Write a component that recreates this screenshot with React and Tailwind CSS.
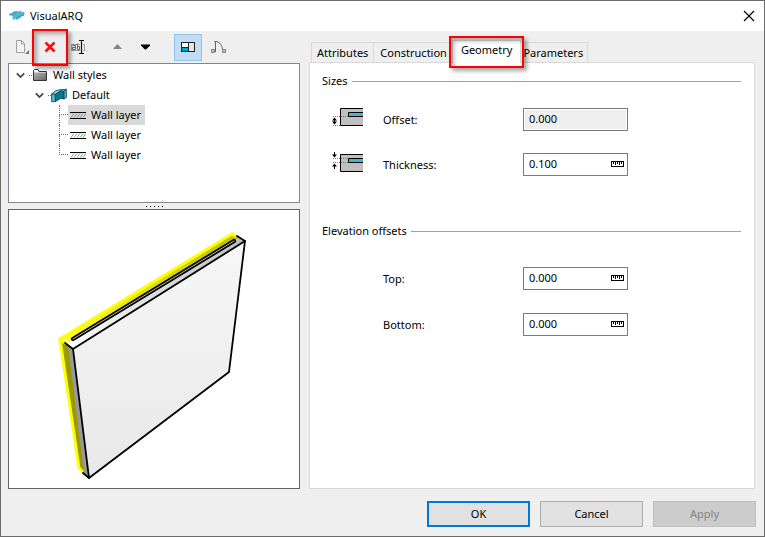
import { useState } from "react";

const AppLogo = () => (
    <svg className="w-4 h-3" viewBox="0 0 16 12">
        <defs>
            <linearGradient id="logo" x1="0" y1="0" x2="1" y2="1">
                <stop offset="0" stopColor="#2e86a8" />
                <stop offset="0.5" stopColor="#55bcd8" />
                <stop offset="1" stopColor="#1b6f96" />
            </linearGradient>
        </defs>
        <path fill="url(#logo)" d="M0 4.2 L1.5 3.2 L3 3.2 L4.5 1.6 L7.5 1 L9 1.8 L11.5 .8 L12.5 1.8 L14.6 2 L15.8 3 L14.8 4.2 L15.4 5.2 L13.6 6.2 L12 6.4 L11.4 8.2 L10 8 L9 9.4 L7.4 9.6 L6.6 8.2 L5.4 9.8 L3.8 9.6 L3.6 7 L3 5.6 L.6 5.4 Z" />
    </svg>
)

const NewIcon = () => (
    <svg className="w-4 h-4" viewBox="0 0 16 16" fill="none">
        <path d="M2.5 1.5 H7.5 L10.5 4.5 V13.5 H2.5 Z M7.5 1.5 V5 H10.5" stroke="#a0a0a0" fill="#f4f4f4" />
        <path d="M15 11 V15 H11 Z" fill="#777" />
    </svg>
)

const DeleteIcon = () => (
    <svg className="w-4 h-4" viewBox="0 0 16 16">
        <path d="M3.5 3.5 L12.5 12.5 M12.5 3.5 L3.5 12.5" stroke="#ff0d0d" strokeWidth="2.6" />
    </svg>
)

const RenameIcon = () => (
    <svg className="w-4 h-4" viewBox="0 0 16 16" fill="none">
        <path d="M10 5.5 H1.5 V11.5 H10 M13 5.5 H14.5 V11.5 H13" stroke="#9a9a9a" />
        <path d="M2.5 6.5 H5.5 V10.5 H2.5 V8.5 H5.5 M7.5 4.5 V10.5 H9.5 V7.5 H7.5" stroke="#666" />
        <path d="M9 1.5 H11 L11.5 2 L12 1.5 H14 M11.5 2 V14 M9 14.5 H11 L11.5 14 L12 14.5 H14" stroke="#111" strokeWidth="1.2" />
    </svg>
)

const UpIcon = () => (
    <svg className="w-4 h-4" viewBox="0 0 16 16"><path d="M7 5.5 H8 L12 10 H3 Z" fill="#868686" /></svg>
)

const DownIcon = () => (
    <svg className="w-4 h-4" viewBox="0 0 16 16"><path d="M3 5.5 H12 V6.5 L8 10.5 H7 L3 6.5 Z" fill="#000" /></svg>
)

const PreviewIcon = () => (
    <svg className="w-4 h-4" viewBox="0 0 16 16">
        <rect x="1.5" y="3.5" width="13" height="9" fill="#e6e6e6" stroke="#222" />
        <rect x="2" y="4" width="6" height="4" fill="#fff" />
        <rect x="2" y="8" width="6" height="4" fill="#00a5d2" />
        <path d="M8.5 3 V13 M2 8.5 H8" stroke="#222" />
    </svg>
)

const CurveIcon = () => (
    <svg className="w-4 h-4" viewBox="0 0 16 16" fill="none">
        <path d="M5.5 13 V2.5 C9 2.5 11.5 5 12.5 10" stroke="#666" />
        <path d="M4 2.5 H7" stroke="#777" />
        <rect x="1.5" y="10.5" width="3" height="3" stroke="#8a8a8a" fill="#bbb" />
        <rect x="12.5" y="10.5" width="3" height="3" stroke="#8a8a8a" fill="#bbb" />
    </svg>
)

const Chevron = () => (
    <svg className="w-[9px] h-[9px]" viewBox="0 0 9 9"><path d="M.8 2.4 L4.5 6.1 L8.2 2.4" fill="none" stroke="#444" strokeWidth="1.7" /></svg>
)

const FolderIcon = () => (
    <svg className="w-4 h-3" viewBox="0 0 16 12">
        <defs>
            <linearGradient id="folder" x1="0" y1="0" x2="1" y2="1">
                <stop offset="0" stopColor="#b5b5b5" />
                <stop offset="1" stopColor="#676767" />
            </linearGradient>
        </defs>
        <path d="M1.5 11.5 V1.5 L2.5 .5 H6 L7 2.5 H14.5 V11.5 Z" fill="#fff" stroke="#333" />
        <path d="M2 11 V3.5 H14 V11 Z" fill="url(#folder)" />
    </svg>
)

const WallIcon = () => (
    <svg className="w-4 h-[15px]" viewBox="0 0 16 15" stroke="#0b3f4c" strokeWidth="0.8" strokeLinejoin="round">
        <path d="M.6 6 L5 2.5 L10 1.5 L15.4 1.4 L13 3.4 L9.5 3 L4.4 6.4 Z" fill="#7fd6e4" />
        <path d="M.6 6 L4.4 6.4 V13.6 L.6 13.8 Z" fill="#4bb9cf" />
        <path d="M4.4 6.4 L9.5 3 L13 3.4 V11 L9.8 10.4 L4.4 13.6 Z" fill="#11758c" />
        <path d="M13 3.4 L15.4 1.4 V9.6 L13 11 Z" fill="#4bb9cf" />
    </svg>
)

const LayerIcon = () => (
    <svg className="w-4 h-[7px]" viewBox="0 0 16 7">
        <path d="M1 5.5 L4 1.5 M4 5.5 L7 1.5 M7 5.5 L10 1.5 M10 5.5 L13 1.5 M13 5.5 L16 1.5" stroke="#777" strokeWidth="0.8" />
        <path d="M0 .5 H16 M0 6.5 H16" stroke="#000" />
    </svg>
)

const RulerIcon = () => (
    <svg className="absolute right-1 top-2 w-[13px] h-[7px] pointer-events-none" viewBox="0 0 13 7">
        <rect x=".5" y=".5" width="12" height="5" fill="#fff" stroke="#000" />
        <path d="M2.5 1 V3 M4.5 1 V4 M6.5 1 V3 M8.5 1 V4 M10.5 1 V3" stroke="#000" />
    </svg>
)

const LayerBody = () => (
    <>
        <rect x="9" y="4" width="22" height="17" fill="#c0c0c0" />
        <path d="M31 3.5 H8.5 V20.5 H31" fill="none" stroke="#000" />
        <path d="M31 7.5 H16.5 V11.5 H31" fill="#45b5cf" stroke="#000" />
    </>
)

const OffsetIcon = () => (
    <svg className="w-[31px] h-[23px]" viewBox="0 3 31 23">
        <LayerBody />
        <path d="M1 11.5 H16 M1 20.5 H8" stroke="#777" strokeDasharray="1 1" />
        <path d="M2.5 13 V19" stroke="#000" />
        <path d="M0 15.5 L2.5 12.5 L5 15.5 Z M0 16.5 L2.5 19.5 L5 16.5 Z" />
    </svg>
)

const ThicknessIcon = () => (
    <svg className="w-[31px] h-[23px] overflow-visible" viewBox="0 2 31 23">
        <LayerBody />
        <path d="M1 7.5 H16 M1 11.5 H16" stroke="#777" strokeDasharray="1 1" />
        <path d="M2.5 1 V5 M2.5 13 V18" stroke="#000" />
        <path d="M0 3.5 L2.5 6.5 L5 3.5 Z M0 15.5 L2.5 12.5 L5 15.5 Z" />
    </svg>
)

const WallPreview = () => (
    <svg className="w-full h-full" viewBox="9 210 290 278" strokeLinejoin="round" strokeLinecap="round">
        <defs>
            <linearGradient id="front" x1="0" y1="0" x2="0" y2="1">
                <stop offset="0" stopColor="#f7f7f7" />
                <stop offset="1" stopColor="#e8e8e8" />
            </linearGradient>
            <linearGradient id="top" x1="0" y1="0" x2="1" y2="0">
                <stop offset="0" stopColor="#fff" />
                <stop offset="1" stopColor="#bdbdbd" />
            </linearGradient>
            <linearGradient id="glow" x1="0" y1="0" x2="1" y2="0">
                <stop offset="0" stopColor="#ffff30" />
                <stop offset="1" stopColor="#bcbc00" />
            </linearGradient>
        </defs>
        <path d="M64 343 L237 235 L245 241 L73 349 Z" fill="url(#top)" />
        <path d="M64 343 L73 349 L89 478 L82 472 Z" fill="#999" />
        <path d="M61 340 L68 346 L84 473 L79 468 Z" fill="#999900" />
        <path d="M60 338 L232 234 L238 238 L70 342 Z" fill="url(#glow)" />
        <path d="M232 234 L60 339 L79 468" fill="none" stroke="#ffff00" strokeWidth="3" />
        <path d="M232 234 L235 236 M60 339 L65 343 M79 468 L82 471" stroke="#ffff00" strokeWidth="3" />
        <path d="M73 349 L245 241 L229 372 L89 478 Z" fill="url(#front)" stroke="#000" strokeWidth="1.8" />
        <path d="M65 343 L73 349 M237 236 L245 241 M83 473 L89 478" stroke="#000" strokeWidth="1.8" />
        <path d="M73 339 L234 241" stroke="#000" strokeWidth="4.2" />
        <path d="M73 339 L234 241" stroke="#b5b5b5" strokeWidth="1" />
    </svg>
)

// red frame drawn around a highlighted control
const Callout = ({ className }) => (
    <span className={`absolute z-10 border-2 border-[#ff0000] shadow-[3px_3px_4px_rgba(0,0,0,0.35),inset_3px_3px_4px_rgba(0,0,0,0.3)] pointer-events-none ${className}`} />
)

const ToolButton = ({ label, className, children }) => (
    <button aria-label={label} className={`relative flex items-center justify-center h-[27px] w-7 ${className || ''}`}>{children}</button>
)

const layers = ['Wall layer', 'Wall layer', 'Wall layer'];
const tabs = ['Attributes', 'Construction', 'Geometry', 'Parameters'];

const Tree = () => {

    const [selected, setSelected] = useState(0);

    return (

        <div className="h-[140px] bg-white border border-[#828790] pt-px pl-[7px] overflow-hidden">
            <div className="flex items-center h-5">
                <Chevron />
                <span className="w-[3px] ml-1 border-t border-dotted border-gray-500" />
                <FolderIcon />
                <span className="ml-[5px]">Wall styles</span>
            </div>
            <div className="flex items-center h-5 pl-[19px]">
                <Chevron />
                <span className="w-[3px] ml-1 border-t border-dotted border-gray-500" />
                <WallIcon />
                <span className="ml-[5px]">Default</span>
            </div>
            <ul className="ml-[43px]">
                {layers.map((layer, index) => (

                    <li key={`layer${index}`} className="flex items-center h-5">
                        <span className="flex flex-col w-[9px] h-full">
                            <span className="h-[10px] border-l border-b border-dotted border-gray-500" />
                            {index < layers.length - 1 && <span className="h-[10px] border-l border-dotted border-gray-500" />}
                        </span>
                        <button onClick={() => setSelected(index)} className={`flex items-center h-5 gap-[5px] pl-0.5 pr-1 ${selected === index ? 'bg-[#d9d9d9]' : ''}`}>
                            <LayerIcon />
                            {layer}
                        </button>
                    </li>
                ))}
            </ul>
        </div>
    )

}

const Heading = ({ children }) => (
    <div className="flex items-center gap-1 h-[18px]">
        <h2>{children}</h2>
        <span className="flex-1 border-t border-[#a0a0a0]" />
    </div>
)

const Field = ({ id, label, value, icon, disabled }) => (
    <div className="grid grid-cols-[51px_140px_105px] items-center h-[23px] pl-[10px]">
        <span>{icon}</span>
        <label htmlFor={id}>{label}</label>
        <div className="relative">
            <input id={id} defaultValue={value} disabled={disabled} className="block w-full h-[23px] px-[5px] pb-0.5 border border-[#7a7a7a] bg-white disabled:bg-[#efefef] shadow-[inset_0_0_0_1px_#fff] outline-none" />
            {!disabled && <RulerIcon />}
        </div>
    </div>
)

const App = () => {

    const [tab, setTab] = useState('Geometry');

    return (

        <div className="flex flex-col w-full min-h-screen border border-[#6b6b6b] bg-[#efefef] text-black text-[11px] leading-4 font-['Noto_Sans','Open_Sans',sans-serif]">
            <header className="flex items-center h-[30px] bg-white pl-2 pr-[9px]">
                <AppLogo />
                <h1 className="ml-[5px]">VisualARQ</h1>
                <button aria-label="Close" className="ml-auto">
                    <svg className="w-3 h-3" viewBox="0 0 12 12"><path d="M1 1 L11 11 M11 1 L1 11" stroke="#000" strokeWidth="1.2" /></svg>
                </button>
            </header>

            <main className="flex flex-1 gap-[9px] pl-[7px] pr-[9px]">
                <section className="flex flex-col w-[292px] shrink-0">
                    <div className="flex items-center h-8">
                        <ToolButton label="New"><NewIcon /></ToolButton>
                        <ToolButton label="Delete">
                            <DeleteIcon />
                            <Callout className="-inset-x-1 -inset-y-[5px]" />
                        </ToolButton>
                        <ToolButton label="Rename"><RenameIcon /></ToolButton>
                        <ToolButton label="Move up" className="ml-3"><UpIcon /></ToolButton>
                        <ToolButton label="Move down"><DownIcon /></ToolButton>
                        <ToolButton label="Show preview" className="ml-[14px] bg-[#c2dcf3] border border-[#90c3ee]"><PreviewIcon /></ToolButton>
                        <ToolButton label="Show curve" className="ml-0.5"><CurveIcon /></ToolButton>
                    </div>
                    <Tree />
                    <div className="flex items-center justify-center gap-[3px] h-[6px]">
                        {[0, 1, 2, 3, 4].map((dot) => <span key={dot} className="w-px h-px bg-black" />)}
                    </div>
                    <div className="flex-1 h-[280px] bg-white border border-[#646464]">
                        <WallPreview />
                    </div>
                </section>

                <section className="flex flex-col flex-1 pt-[9px]">
                    <div role="tablist" className="flex items-end h-[22px] pl-0.5">
                        {tabs.map((name) => (

                            <button key={name} role="tab" aria-selected={tab === name} onClick={() => setTab(name)}
                                className={tab === name
                                    ? "relative z-10 h-[23px] -mb-px -mx-0.5 px-2 pb-1 bg-white border-x border-t border-[#d9d9d9]"
                                    : "h-5 px-[6px] border border-b-0 border-l-0 first:border-l first:px-[5px] last:px-1 border-[#d9d9d9]"}>
                                {name}
                                {name === 'Geometry' && <Callout className="-inset-x-1 -top-[5px] -bottom-[5px]" />}
                            </button>
                        ))}
                    </div>
                    <div role="tabpanel" className="flex-1 bg-white border border-[#d9d9d9] pt-[9px] pl-3 pr-[13px]">
                        <Heading>Sizes</Heading>
                        <div className="flex flex-col gap-[22px] mt-[18px]">
                            <Field id="offset" label="Offset:" value="0.000" icon={<OffsetIcon />} disabled />
                            <Field id="thickness" label="Thickness:" value="0.100" icon={<ThicknessIcon />} />
                        </div>
                        <div className="mt-[46px]">
                            <Heading>Elevation offsets</Heading>
                        </div>
                        <div className="flex flex-col gap-[23px] mt-[27px]">
                            <Field id="top-offset" label="Top:" value="0.000" />
                            <Field id="bottom-offset" label="Bottom:" value="0.000" />
                        </div>
                    </div>
                </section>
            </main>

            <footer className="flex justify-end gap-[10px] pt-3 pr-2 pb-[9px]">
                <button className="w-[103px] h-[26px] bg-[#e1e1e1] border-2 border-[#0078d7]">OK</button>
                <button className="w-[103px] h-[26px] bg-[#e1e1e1] border border-[#adadad]">Cancel</button>
                <button disabled className="w-[103px] h-[26px] bg-[#cccccc] border border-[#bfbfbf] text-[#838383]">Apply</button>
            </footer>
        </div>
    )

}

export default App;
